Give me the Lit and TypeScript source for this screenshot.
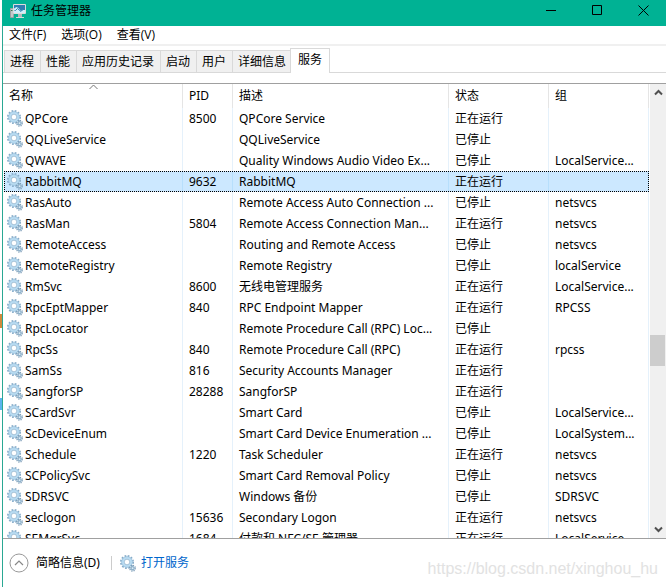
import { LitElement, html, css, svg } from "lit";
import { customElement, property } from "lit/decorators.js";
import { classMap } from "lit/directives/class-map.js";

interface Service {
  name: string;
  pid?: string;
  description: string;
  running: boolean;
  group?: string;
}

const SERVICES: Service[] = [
  { name: "QPCore", pid: "8500", description: "QPCore Service", running: true },
  { name: "QQLiveService", description: "QQLiveService", running: false },
  { name: "QWAVE", description: "Quality Windows Audio Video Ex...", running: false, group: "LocalService..." },
  { name: "RabbitMQ", pid: "9632", description: "RabbitMQ", running: true },
  { name: "RasAuto", description: "Remote Access Auto Connection ...", running: false, group: "netsvcs" },
  { name: "RasMan", pid: "5804", description: "Remote Access Connection Man...", running: true, group: "netsvcs" },
  { name: "RemoteAccess", description: "Routing and Remote Access", running: false, group: "netsvcs" },
  { name: "RemoteRegistry", description: "Remote Registry", running: false, group: "localService" },
  { name: "RmSvc", pid: "8600", description: "无线电管理服务", running: true, group: "LocalService..." },
  { name: "RpcEptMapper", pid: "840", description: "RPC Endpoint Mapper", running: true, group: "RPCSS" },
  { name: "RpcLocator", description: "Remote Procedure Call (RPC) Loc...", running: false },
  { name: "RpcSs", pid: "840", description: "Remote Procedure Call (RPC)", running: true, group: "rpcss" },
  { name: "SamSs", pid: "816", description: "Security Accounts Manager", running: true },
  { name: "SangforSP", pid: "28288", description: "SangforSP", running: true },
  { name: "SCardSvr", description: "Smart Card", running: false, group: "LocalService..." },
  { name: "ScDeviceEnum", description: "Smart Card Device Enumeration ...", running: false, group: "LocalSystem..." },
  { name: "Schedule", pid: "1220", description: "Task Scheduler", running: true, group: "netsvcs" },
  { name: "SCPolicySvc", description: "Smart Card Removal Policy", running: false, group: "netsvcs" },
  { name: "SDRSVC", description: "Windows 备份", running: false, group: "SDRSVC" },
  { name: "seclogon", pid: "15636", description: "Secondary Logon", running: true, group: "netsvcs" },
  { name: "SEMgrSvc", pid: "1684", description: "付款和 NFC/SE 管理器", running: true, group: "LocalService..." },
];

@customElement("gear-icon")
export class GearIcon extends LitElement {
  static styles = css`
    :host { display: block; width: 16px; height: 17px; flex: none; }
    svg { display: block; }
  `;
  render() {
    return html`<svg width="16" height="17" viewBox="0 0 16 17" fill="none" aria-hidden="true">
      ${svg`
        <circle cx="7" cy="7" r="6" stroke="#86abc8" stroke-width="2" stroke-dasharray="1.7 1.44"/>
        <circle cx="7" cy="7" r="4.2" stroke="#b9dcf2" stroke-width="2.8"/>
        <circle cx="7" cy="7" r="5.4" stroke="#93bad6" stroke-width=".6"/>
        <circle cx="7" cy="7" r="2.8" fill="#fff" stroke="#86acc8" stroke-width=".7"/>
        <circle cx="12.6" cy="13.2" r="2.8" stroke="#7c9cb6" stroke-width="1.4" stroke-dasharray="1.1 1.1"/>
        <circle cx="12.6" cy="13.2" r="1.6" fill="#dcebf5" stroke="#8fb2cb" stroke-width="1.4"/>`}
    </svg>`;
  }
}

@customElement("service-table")
export class ServiceTable extends LitElement {
  @property({ attribute: false }) services: Service[] = [];
  @property() selected = "";

  static styles = css`
    :host {
      display: block; overflow: hidden; flex: 1; min-width: 0;
      font-family: "Noto Sans", "Noto Sans CJK SC", sans-serif;
    }
    table { width: 100%; table-layout: fixed; border-collapse: separate; border-spacing: 0; }
    th, td {
      box-sizing: border-box; padding: 0 0 0 6px; text-align: left; font-weight: 400;
      white-space: nowrap; overflow: hidden; border-right: 1px solid #e5f1fb;
    }
    th { height: 24px; border-right-color: #e5e5e5; position: relative; }
    td { height: 21px; line-height: 20px; }
    .name { width: 179px; }
    .pid { width: 50px; }
    .status, .group { width: 100px; }
    .label { display: flex; align-items: center; gap: 2px; }
    th.name { padding-left: 5px; }
    td.name { padding-left: 3px; }
    .sort { position: absolute; top: 0; left: 48%; }
    .selected { outline: 1px dotted #000; outline-offset: -1px; }
    .selected td { background: #cce8ff; border-right-color: #b7dffc; }
  `;

  render() {
    return html`<table>
      <thead>
        <tr>
          <th class="name">名称<svg class="sort" width="9" height="6" viewBox="0 0 9 6" fill="none" stroke="#777" aria-hidden="true"><path d="M.5 5 4.500 1l4 4"/></svg></th>
          <th class="pid">PID</th>
          <th>描述</th>
          <th class="status">状态</th>
          <th class="group">组</th>
        </tr>
      </thead>
      <tbody>
        ${this.services.map((s) => html`<tr class=${classMap({ selected: s.name === this.selected })}>
          <td class="name"><div class="label"><gear-icon></gear-icon>${s.name}</div></td>
          <td>${s.pid}</td>
          <td>${s.description}</td>
          <td>${s.running ? "正在运行" : "已停止"}</td>
          <td>${s.group}</td>
        </tr>`)}
      </tbody>
    </table>`;
  }
}

@customElement("app-root")
export class AppRoot extends LitElement {
  static styles = css`
    :host {
      display: flex; height: 100vh; overflow: hidden; background: #fff; color: #000;
      font: 12px/16px "Open Sans", "Noto Sans CJK SC", sans-serif;
    }
    button { font: inherit; color: inherit; background: none; border: 0; margin: 0; padding: 0; }
    .edge {
      width: 2px; flex: none;
      background: linear-gradient(#0000 314px, #d08a3c 314px 328px, #0000 328px 398px, #5ab4ee 398px 410px, #0000 410px);
    }
    .window { flex: 1; min-width: 0; display: flex; flex-direction: column; border-left: 1px solid #2aa893; }
    .titlebar { display: flex; height: 26px; flex: none; background: #00b294; margin-left: -1px; padding-left: 8px; }
    .title { flex: 1; display: flex; gap: 5px; margin: 0; padding-top: 3px; font: inherit; }
    .controls { display: flex; }
    .controls button { width: 46px; height: 20px; display: grid; place-items: center; }
    .controls svg, .logo { display: block; }
    .menubar { display: flex; gap: 15px; height: 18px; flex: none; padding-left: 6px; border-bottom: 2px solid #f0f0f0; }
    .menubar button { line-height: 18px; }
    .tabs { display: flex; align-items: flex-end; height: 26px; flex: none; padding-left: 1px; border-bottom: 1px solid #d9d9d9; }
    .tab {
      box-sizing: border-box; height: 22px; padding: 0 6px 0 5px; background: #f0f0f0;
      border: 1px solid #d9d9d9; border-width: 1px 0 0 1px;
    }
    .tab.active { height: 25px; margin: 0 0 -1px -2px; padding: 0 7px 2px; background: #fff; border-width: 1px 1px 0; }
    .list { display: flex; flex: 1; min-height: 0; margin: 10px 0 0; padding-left: 1px; border: 1px solid #a0a0a0; border-width: 1px 0; overflow: hidden; }
    .scrollbar { width: 16px; margin-left: 1px; flex: none; display: flex; flex-direction: column; background: #f0f0f0; }
    .scrollbar button { height: 17px; display: grid; place-items: center; }
    .track { flex: 1; display: grid; grid-template-rows: 234fr 31fr 155fr; }
    .thumb { grid-row: 2; background: #cdcdcd; margin-right: 1px; }
    .footer { display: flex; align-items: center; height: 48px; flex: none; padding-left: 6px; position: relative; }
    .details { display: flex; align-items: center; gap: 7px; font-family: "Noto Sans", "Noto Sans CJK SC", sans-serif; }
    .divider { width: 1px; height: 14px; background: #ccc; margin: 0 8px 0 11px; }
    .open { display: flex; align-items: center; gap: 5px; color: #0066cc; text-decoration: none; }
    .watermark { position: absolute; right: 8px; bottom: 8px; font: 16px/20px "Liberation Sans", sans-serif; color: #e2e2e2; }
  `;

  private tabs = ["进程", "性能", "应用历史记录", "启动", "用户", "详细信息", "服务"];

  render() {
    return html`
      <div class="edge"></div>
      <main class="window">
        <header class="titlebar">
          <h1 class="title">
            <svg class="logo" width="16" height="16" viewBox="0 0 16 16" fill="none" aria-hidden="true">
              <path d="M.5 5.500h3v9h-3z" fill="#c4c8ca" stroke="#9aa0a2"/>
              <path d="M1 7.500h1.500" stroke="#3c7a50"/>
              <path d="M3.500 1.500h12v9h-12z" fill="#2f7fb2" stroke="#dcdcdc"/>
              <path d="M4 5.500 6.500 4l2 1 2.500 3 3-2h1V10H4z" fill="#cfeffa"/>
              <path d="M4.500 7.500h1l2-2 3.500 3 2-2h2" stroke="#2f7fb2"/>
              <path d="M8 11h4v3H8z" fill="#b4b8ba"/>
              <path d="M6 14.500h8" stroke="#d7dadb"/>
            </svg>
            <span>任务管理器</span>
          </h1>
          <div class="controls">
            <button aria-label="最小化"><svg width="10" height="10" stroke="#000"><path d="M0 5.500h10"/></svg></button>
            <button aria-label="最大化"><svg width="10" height="10" stroke="#000" fill="none"><path d="M.5.5h9v9h-9z"/></svg></button>
            <button aria-label="关闭"><svg width="11" height="11" stroke="#000"><path d="M.5.5l10 10M10.500.5l-10 10"/></svg></button>
          </div>
        </header>
        <nav class="menubar">
          <button>文件(F)</button><button>选项(O)</button><button>查看(V)</button>
        </nav>
        <div class="tabs" role="tablist">
          ${this.tabs.map((t) => html`<button role="tab" aria-selected=${t === "服务"} class=${classMap({ tab: true, active: t === "服务" })}>${t}</button>`)}
        </div>
        <section class="list">
          <service-table .services=${SERVICES} selected="RabbitMQ"></service-table>
          <div class="scrollbar">
            <button aria-label="向上滚动"><svg width="9" height="7" fill="none" stroke="#505050" stroke-width="2"><path d="M1 5.500 4.500 2 8 5.500"/></svg></button>
            <div class="track"><div class="thumb"></div></div>
            <button aria-label="向下滚动"><svg width="9" height="7" fill="none" stroke="#505050" stroke-width="2"><path d="M1 1.500 4.500 5 8 1.500"/></svg></button>
          </div>
        </section>
        <footer class="footer">
          <button class="details">
            <svg width="20" height="20" fill="none" aria-hidden="true"><circle cx="10" cy="10" r="9" stroke="#999"/><path d="M6 12l4-4 4 4" stroke="#888" stroke-width="1.200"/></svg>
            简略信息(D)
          </button>
          <span class="divider"></span>
          <a class="open" href="#services"><gear-icon></gear-icon>打开服务</a>
          <span class="watermark">https://blog.csdn.net/xinghou_hu</span>
        </footer>
      </main>`;
  }
}
